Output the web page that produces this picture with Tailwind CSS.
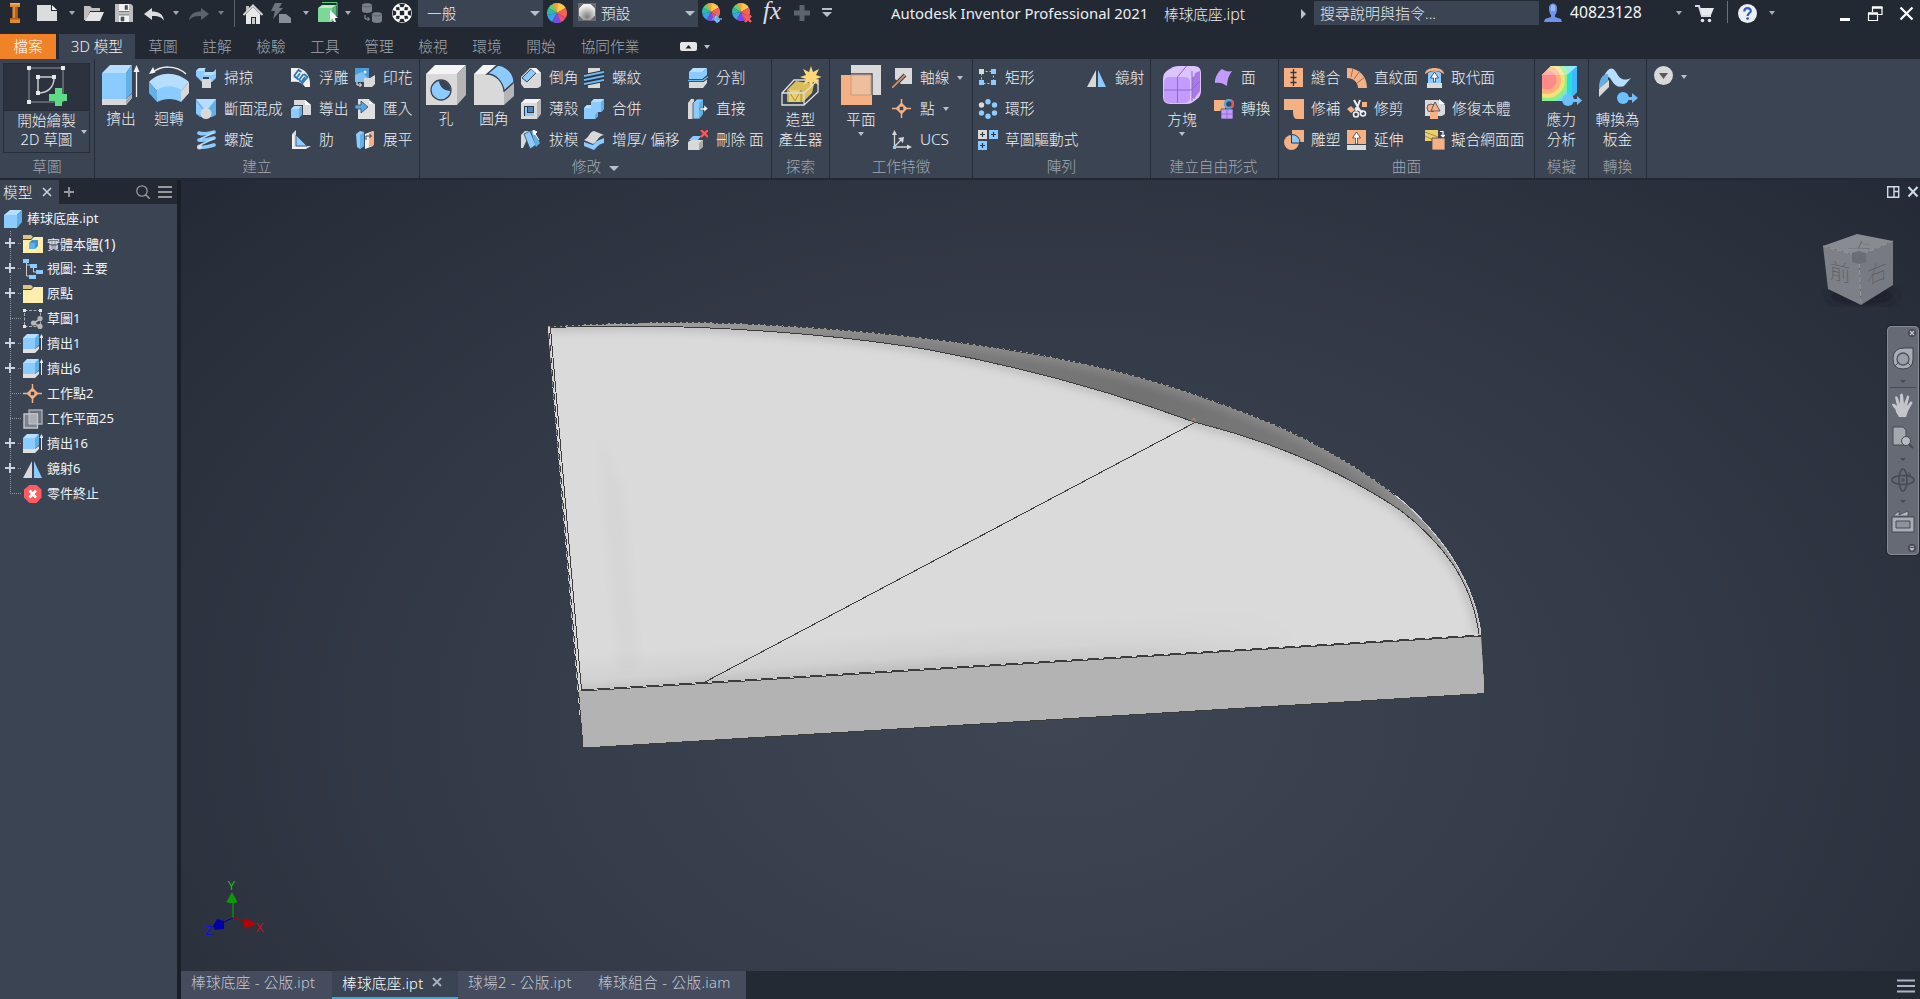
<!DOCTYPE html>
<html lang="zh-Hant">
<head>
<meta charset="utf-8">
<title>Autodesk Inventor Professional 2021</title>
<script src="https://cdn.jsdelivr.net/npm/@tailwindcss/browser@4"></script>
</head>
<body class="w-[1920px] h-[999px] overflow-hidden bg-[#222933] font-['Noto_Sans','Noto_Sans_CJK_TC',sans-serif] text-[14.67px] leading-none text-[#f0f2f5] whitespace-nowrap">
<!-- shared icon definitions -->
<svg class="hidden">
  <defs>
    <symbol id="arr" viewBox="0 0 6 4"><path d="M0 0h6L3 4z" fill="currentColor"/></symbol>
    <symbol id="box" viewBox="0 0 20 20"><path d="M1 6l6-5h12l-5 5z" fill="#b5deff"/><path d="M1 6h13v13H1z" fill="#8ccbff"/><path d="M14 6l5-5v12l-5 6z" fill="#5fb0e8"/></symbol>
    <symbol id="extr" viewBox="0 0 20 20"><path d="M0 15h12l4-3v3l-4 4H0z" fill="#e0e0e0"/><path d="M0 4l4-4h12l-3 4z" fill="#b5deff"/><path d="M0 4h12v11H0z" fill="#8ccbff"/><path d="M12 4l4-4v11l-4 4z" fill="#5fb0e8"/><path d="M18.500 16V3" stroke="#e6e6e6" stroke-width="1"/><path d="M16.500 4l2-4 2 4z" fill="#e6e6e6"/></symbol>
    <symbol id="mirror" viewBox="0 0 20 20"><path d="M9 2v17H0z" fill="#d8d8d8"/><path d="M11 2v17h8z" fill="#8ccbff"/></symbol>
    <symbol id="wpoint" viewBox="0 0 20 20"><path d="M9.500 0v19M0 9.500h19" stroke="#f5b183" stroke-width="1.500"/><path d="M9.500 3.500l6 6-6 6-6-6z" fill="#f5b183"/><rect x="7.750" y="7.750" width="3.500" height="3.500" fill="#3b4453"/></symbol>
    <symbol id="folder" viewBox="0 0 20 20"><path d="M0 3V1h8l2 2-2 2H0z" fill="#d9c584"/><path d="M0 6h8l3-3h9v16H0z" fill="#ffedae"/></symbol>
    <symbol id="wheel" viewBox="0 0 20 20"><g transform="translate(10 10)"><path d="M0 0V-10A10 10 0 0 1 8.700-5z" fill="#ffc845"/><path d="M0 0L8.700-5A10 10 0 0 1 8.700 5z" fill="#f4605c"/><path d="M0 0L8.700 5A10 10 0 0 1 3 9.600z" fill="#e8506c"/><path d="M0 0L4 9.200A10 10 0 0 1-5 8.700z" fill="#7a4be0"/><path d="M0 0L-5 8.700A10 10 0 0 1-9.800 2z" fill="#3ca0f0"/><path d="M0 0L-9.800 2A10 10 0 0 1-8.700-5z" fill="#2fb8b0"/><path d="M0 0L-8.700-5A10 10 0 0 1-3-9.500z" fill="#62cf6a"/><path d="M0 0L-4-9.200A10 10 0 0 1 1-10z" fill="#ff9a3c"/></g></symbol>
    <pattern id="hatch" width="5" height="5" patternUnits="userSpaceOnUse"><path d="M-1 6L6-1" stroke="#2b323d" stroke-width="1"/></pattern>
  </defs>
</svg>

<div class="flex flex-col w-[1920px] h-[999px]">
  <!-- title bar -->
  <header class="relative flex items-center h-[27px] shrink-0 text-[#a9afba]">
    <svg class="absolute left-0 top-0 w-[29px] h-[28px]"><rect width="29" height="28" fill="url(#hatch)"/></svg>
    <svg class="absolute left-[838px] top-0 w-[462px] h-[28px]"><rect width="462" height="28" fill="url(#hatch)"/></svg>
    <svg class="absolute left-[1780px] top-0 w-[140px] h-[28px]"><rect width="140" height="28" fill="url(#hatch)"/></svg>
    <div class="relative w-[30px] flex justify-center"><svg class="w-[10px] h-[20px] -mt-0.5" viewBox="0 0 10 20"><path d="M0 0h10v4H7.500v11H10v5H0v-5h2.500V4H0z" fill="#e08a32"/><path d="M5 4h2.500v11H5zM0 15h10v1.500H0z" fill="#b35f17"/><path d="M0 0h10v1.500H0z" fill="#f5b469"/></svg></div>
    <div class="w-[34px] flex justify-center"><svg class="w-5 h-[16px] -mt-px" viewBox="0 0 20 16"><path d="M0 0h14v6h6v10H0z" fill="#dcdcdc"/><path d="M15 0l5 5h-5z" fill="#f2f2f2"/></svg></div>
    <div class="w-4 flex justify-center"><svg class="w-[6px] h-1 -mt-px"><use href="#arr"/></svg></div>
    <div class="w-7 flex justify-center"><svg class="w-5 h-[17px] -mt-px" viewBox="0 0 20 17"><path d="M0 15V1h6l2 2h8v3H6L2 15z" fill="#bfbfbf"/><path d="M6 7h14l-4 9H1z" fill="#e4e4e4"/></svg></div>
    <div class="w-8 flex justify-center"><svg class="w-[18px] h-[18px] -mt-px" viewBox="0 0 18 18"><path d="M0 0h16l2 2v16H0z" fill="#bdbdbd"/><path d="M4 0h10v7H4zM4 11h10v7H4z" fill="#f2f2f2"/><path d="M10 1.500h2.500v4H10zM4 11h10M4 7.500h10M6 13h3v4H6z" stroke="#4a4f59" fill="#4a4f59" stroke-width=".6"/></svg></div>
    <div class="w-7 flex justify-center"><svg class="w-5 h-[13px] mt-px" viewBox="0 0 20 13"><path d="M0 6l8-6v3.500c6 0 11 2 12 9-3-4-7-4.500-12-4.500v4z" fill="#dcdcdc"/></svg></div>
    <div class="w-4 flex justify-center"><svg class="w-[6px] h-1 -mt-px"><use href="#arr"/></svg></div>
    <div class="w-[30px] flex justify-center"><svg class="w-5 h-[13px] mt-px" viewBox="0 0 20 13"><path d="M20 6l-8-6v3.500c-6 0-11 2-12 9 3-4 7-4.500 12-4.500v4z" fill="#5d626b"/></svg></div>
    <div class="w-[14px] flex justify-center text-[#757b86]"><svg class="w-[6px] h-1 -mt-px"><use href="#arr"/></svg></div>
    <div class="w-3 flex justify-center"><div class="w-px h-[27px] bg-[#5b616c]"></div></div>
    <div class="w-[26px] flex justify-center"><svg class="w-5 h-5" viewBox="0 0 20 20"><path d="M3 2h3v4L3 8z" fill="#bdbdbd"/><path d="M3 10l7-7 7 7v10h-4v-7H8v7H3z" fill="#e8e8e8"/><path d="M9 14h3v6H9z" fill="#c8c8c8"/><path d="M.5 11L10 1.500 19.500 11" fill="none" stroke="#d2d2d2" stroke-width="2"/></svg></div>
    <div class="w-[30px] flex justify-center"><svg class="w-5 h-5 -mt-px" viewBox="0 0 20 20"><path d="M4 0h7L8 5h4L2 16l2-8H0z" fill="#6f747d"/><path d="M8 11h7l5 4v5H8z" fill="#8a8f97"/></svg></div>
    <div class="w-5 flex justify-center"><svg class="w-[6px] h-1 -mt-px"><use href="#arr"/></svg></div>
    <div class="w-6 flex justify-center"><svg class="w-5 h-5 -mt-[3px]" viewBox="0 0 20 20"><path d="M4 .5h15V14" fill="none" stroke="#4bd47a"/><path d="M0 6l4-3h15l-4 3z" fill="#b0f0c4"/><path d="M0 6h14v14H0z" fill="#7bd897"/><path d="M14 6l4-3v13l-4 4z" fill="#58b877"/><path d="M12 8l8 8h-3.500l1.500 4-2 .5-1.500-4L12 19z" fill="#fff"/></svg></div>
    <div class="w-4 flex justify-center"><svg class="w-[6px] h-1 -mt-px"><use href="#arr"/></svg></div>
    <div class="w-8 flex justify-center"><svg class="w-5 h-5 -mt-px" viewBox="0 0 20 20"><path d="M0 2c0-2.500 10-2.500 10 0v6c0 2.500-10 2.500-10 0zM10 11c0-2.500 10-2.500 10 0v7c0 2.500-10 2.500-10 0z" fill="#7b8088"/><path d="M3 12v4h4M5.500 14l2 2-2 2" stroke="#9a9fa6" fill="none"/><path d="M0 2c0 2.500 10 2.500 10 0M10 11c0 2.500 10 2.500 10 0" stroke="#5d626b" fill="none"/></svg></div>
    <div class="w-7 flex justify-center"><svg class="w-5 h-5 -mt-px" viewBox="0 0 20 20"><circle cx="10" cy="10" r="10" fill="#fff"/><path d="M8 8h4v4H8zM7.500 1l5 0-1 3h-3zM7.500 19h5l-1-3h-3zM1 7.500v5l3-1v-3zM19 7.500v5l-3-1v-3zM4 4.500l3-.5.500 3L4.500 7zM16 4.500L13 4l-.5 3 3 0zM4 15.500l3 .5.500-3-3 0zM16 15.500l-3 .5-.5-3 3 0z" fill="#20252e" stroke="#20252e" stroke-width=".4"/></svg></div>
    <div class="ml-0.5 w-[125px] h-[27px] bg-[#3b4453] flex items-center justify-between pl-[9px] pr-[3px] text-[#eceff3]"><span class="font-light -mt-px">一般</span><svg class="w-[10px] h-[5px] text-[#b9c0cb]" viewBox="0 0 10 5"><path d="M0 0h10L5 5z" fill="currentColor"/></svg></div>
    <div class="w-7 flex justify-center"><svg class="w-5 h-5 -mt-px"><use href="#wheel"/></svg></div>
    <div class="ml-0.5 w-[125px] h-[27px] bg-[#3b4453] flex items-center pl-[5px] pr-[3px] text-[#eceff3]">
      <svg class="w-[18px] h-[18px] -mt-1" viewBox="0 0 18 18"><defs><radialGradient id="ballg" cx=".5" cy=".8" r=".7"><stop offset="0" stop-color="#7c7c7c"/><stop offset="1" stop-color="#f4f4f4"/></radialGradient></defs><path fill="#6b6b6b" d="M0 0h18v18H0z"/><path d="M5.500 1h7L17 5.500v7L12.500 17h-7L1 12.500v-7z" fill="url(#ballg)"/></svg>
      <span class="ml-[5px] -mt-px font-light">預設</span><svg class="ml-auto w-[10px] h-[5px] text-[#b9c0cb]" viewBox="0 0 10 5"><path d="M0 0h10L5 5z" fill="currentColor"/></svg></div>
    <div class="w-7 flex justify-center"><svg class="w-5 h-5 -mt-px" viewBox="0 0 20 20"><use href="#wheel" width="18" height="18"/><path d="M13 13h3l2 5-3 2-3-3z" fill="#8ccbff"/><path d="M15 11v9M10 16h10" stroke="#5fb0e8" stroke-width="1.500"/></svg></div>
    <div class="w-8 flex justify-center"><svg class="w-5 h-5 -mt-px" viewBox="0 0 20 20"><use href="#wheel" width="18" height="18"/><path d="M13 12.500l6 6.500M19 12.500L13 19" stroke="#ff5a5f" stroke-width="2.500"/></svg></div>
    <div class="w-7 flex justify-center"><span class="font-['Liberation_Serif',serif] italic text-[25px] leading-5 -mt-1.5 text-[#dcdfe3]">fx</span></div>
    <div class="w-8 flex justify-center"><svg class="w-4 h-4 -mt-px" viewBox="0 0 16 16"><path d="M5.500 0h5v5.500H16v5h-5.500V16h-5v-5.500H0v-5h5.500z" fill="#5d626b"/></svg></div>
    <div class="w-[18px] flex justify-center"><svg class="w-[10px] h-[9px] -mt-0.5" viewBox="0 0 10 9"><path d="M0 0h10v2H0zM0 4h10L5 9z" fill="#b9bec7"/></svg></div>
    <div class="relative ml-[55px] w-[273px] text-[14.900px] text-[#eceef1]">Autodesk Inventor Professional 2021</div>
    <div class="relative w-[137px] text-[#eceef1] font-light">棒球底座<span class="text-[16px]">.ipt</span></div>
    <svg class="w-[5px] h-[10px]" viewBox="0 0 5 10"><path d="M0 0l5 5-5 5z" fill="#b9c0cb"/></svg>
    <div class="ml-[8px] -mt-px w-[225px] h-[24px] bg-[#3b4453] flex items-center pl-[6px] text-[15px] text-[#e6e9ee] font-light">搜尋說明與指令...</div>
    <svg class="ml-[5px] w-[18px] h-[19px] -mt-0.5" viewBox="0 0 18 19"><path d="M5 5c0-6 8-6 8 0 0 4-1 6-2 7v2l6 2 1 3H0l1-3 6-2v-2C6 11 5 9 5 5z" fill="#6f93ea"/><path d="M7 4c0-3 4-3 4 0v4H7z" fill="#9bb8ff"/></svg>
    <span class="ml-[8px] -mt-px w-[96px] text-[15.700px] text-[#f6f7f8]">40823128</span>
    <div class="w-[26px] flex justify-center -mt-px"><svg class="w-[6px] h-1"><use href="#arr"/></svg></div>
    <svg class="ml-[3px] w-5 h-[18px]" viewBox="0 0 20 18"><path d="M0 1h4l3 10h9" fill="none" stroke="#d5d9e6" stroke-width="2"/><path d="M5 3h14l-3 7H7z" fill="#e8eaf2"/><circle cx="7.500" cy="15.500" r="1.800" fill="#dfe3f2"/><circle cx="14.500" cy="15.500" r="1.800" fill="#dfe3f2"/></svg>
    <div class="ml-[12px] -mt-1 w-px h-[22px] bg-[#6b717c]"></div>
    <svg class="ml-[10px] w-[19px] h-[19px] -mt-px" viewBox="0 0 19 19"><circle cx="9.500" cy="9.500" r="9.500" fill="#eceff5"/><path d="M6.300 7.500c0-4.500 6.500-4.300 6.500-.6 0 2.300-3.200 2.400-3.200 5" fill="none" stroke="#2f5db8" stroke-width="2.200"/><circle cx="9.600" cy="14.600" r="1.400" fill="#2f5db8"/></svg>
    <div class="ml-[11px] w-[8px] flex justify-center -mt-px"><svg class="w-[6px] h-1"><use href="#arr"/></svg></div>
    <svg class="relative ml-[64px] w-[75px] h-[16px]" viewBox="0 0 75 16" fill="none" stroke="#fff"><path d="M0 13.500h10" stroke-width="3"/><path d="M28.500 7.500h9v7h-9zM32.500 6V1.500h9.500v7h-4" stroke-width="1.200"/><path d="M28 7.500h10M32 1.500h10.500" stroke-width="2.400"/><path d="M60.500 1.500l12 12M72.500 1.500l-12 12" stroke-width="2.200"/></svg>
  </header>

  <!-- ribbon tabs -->
  <nav class="flex items-end h-8 shrink-0 font-light text-[#a3a8b0]">
    <div class="w-14 h-[25px] bg-[#f08327] text-white flex items-center justify-center">檔案</div>
    <div class="ml-[3px] w-[76px] h-[25px] bg-[#3b4453] text-[#f0f2f5] flex items-center justify-center">3D 模型</div>
    <div class="ml-[1px] w-[54px] h-[25px] flex items-center justify-center">草圖</div>
    <div class="w-[54px] h-[25px] flex items-center justify-center">註解</div>
    <div class="w-[54px] h-[25px] flex items-center justify-center">檢驗</div>
    <div class="w-[54px] h-[25px] flex items-center justify-center">工具</div>
    <div class="w-[54px] h-[25px] flex items-center justify-center">管理</div>
    <div class="w-[54px] h-[25px] flex items-center justify-center">檢視</div>
    <div class="w-[54px] h-[25px] flex items-center justify-center">環境</div>
    <div class="w-[54px] h-[25px] flex items-center justify-center">開始</div>
    <div class="w-[84px] h-[25px] flex items-center justify-center">協同作業</div>
    <div class="ml-[28px] h-[25px] flex items-center gap-[7px] text-[#b9c0cb]"><svg class="w-[17px] h-[9px]" viewBox="0 0 17 9"><rect width="17" height="9" rx="2" fill="#e6e6e6"/><path d="M5.500 6.500L8.500 3l3 3.500z" fill="#222"/></svg><svg class="w-[6px] h-1"><use href="#arr"/></svg></div>
  </nav>

  <!-- ribbon -->
  <section class="flex h-[121px] shrink-0 bg-[#3b4453] border-b-2 border-[#222933] font-light text-[#f0f2f5]">
    <!-- sketch -->
    <div class="w-[95px] pt-[3px] border-r border-[#262c37] flex flex-col">
      <div class="h-[93px] flex pt-px pl-[3px]">
        <div class="w-[87px] h-[90px] border border-[#272d38] flex flex-col">
          <div class="h-[47px] bg-[#2c323e] border-b border-[#272d38] flex justify-center pt-[2px]">
            <svg class="w-10 h-10" viewBox="0 0 40 40"><path d="M2 2h34v34H2z" fill="none" stroke="#8f949d"/><path d="M11 11h16v1c0 9-6 15-16 15z" fill="none" stroke="#c9ccd1" stroke-width="1.500"/><path d="M0 0h4v4H0zM34 0h4v4h-4zM0 34h4v4H0zM9 9h4v4H9zM25 9h4v4h-4zM9 25h4v4H9z" fill="#e8e8e8"/><path d="M28 22h7v6h5v7h-5v5h-7v-5h-6v-7h6z" fill="#5fdb85"/></svg>
          </div>
          <div class="relative flex-1 flex flex-col items-center leading-[19px]"><span>開始繪製</span><span>2D 草圖</span><svg class="absolute right-[2px] top-[19px] w-[6px] h-1 text-[#b9c0cb]"><use href="#arr"/></svg></div>
        </div>
      </div>
      <div class="h-[23px] flex items-center justify-center text-[#a3a8b0]">草圖</div>
    </div>
    <!-- create -->
    <div class="w-[325px] pt-[3px] border-r border-[#262c37] flex flex-col">
      <div class="h-[93px] flex pl-[2px]">
        <div class="w-12 flex flex-col items-center pt-[3px] gap-[6px]"><svg class="w-10 h-10" viewBox="0 0 40 40"><path d="M1 34h24l6-5v4l-6 7H1z" fill="#d9d9d9"/><path d="M25 35l6-6v4l-6 7z" fill="#aaa"/><path d="M1 8l8-8h22l-6 8z" fill="#b5deff"/><path d="M1 8h24v26H1z" fill="#8ccbff"/><path d="M25 8l6-8v28l-6 6z" fill="#62b0e8"/><path d="M35.500 32V5" stroke="#f2f2f2" stroke-width="1.300"/><path d="M32.500 7l3-7 3 7z" fill="#f2f2f2"/></svg><span>擠出</span></div>
        <div class="w-12 flex flex-col items-center pt-[3px] gap-[6px]"><svg class="w-10 h-10" viewBox="0 0 40 40"><path d="M3 8C12 0 27 0 37 9" fill="none" stroke="#f2f2f2" stroke-width="1.500"/><path d="M0 9l4-7 2.500 5.500z" fill="#f2f2f2"/><path d="M0 17C10 6 28 6 40 17l-8 9c-6-5-16-5-24 0z" fill="#b5deff"/><path d="M8 25c8-5 16-5 24 0v12c-7-4-16-4-24 0z" fill="#8ccbff"/><path d="M0 17l8 9v11L0 28z" fill="#62b0e8"/><path d="M40 17v11l-8 9V26z" fill="#d9d9d9"/></svg><span>迴轉</span></div>
        <div class="ml-[3px] w-[95px] flex flex-col">
          <div class="h-[31px] flex items-center gap-2"><svg class="w-5 h-5" viewBox="0 0 20 20"><path d="M0 3l3-3h6v4h8l3-3v9l-4 4h-3V9H7v6L0 8z" fill="#8ccbff"/><path d="M0 3l3-3h7L7 3zM7 6l3-2h10l-3 3H7z" fill="#b5deff"/><path d="M6 11h9v9H6z" fill="#d9d9d9"/></svg><span>掃掠</span></div>
          <div class="h-[31px] flex items-center gap-2"><svg class="w-5 h-5" viewBox="0 0 20 20"><path d="M0 0h20v16l-4 2H4l-4-3z" fill="#62b0e8"/><path d="M0 0h20L12 10H8z" fill="#b5deff"/><path d="M0 2l7 9-3 5-4-2z" fill="#8ccbff"/><circle cx="10" cy="14.500" r="5.500" fill="#d9d9d9"/></svg><span>斷面混成</span></div>
          <div class="h-[31px] flex items-center gap-2"><svg class="w-5 h-5" viewBox="0 0 20 20"><path d="M3 3c5 2 11 0 15-1M3 10c5 1 11-1 15-2M5 17c5 1 9-1 13-2" fill="none" stroke="#8ccbff" stroke-width="3.600" stroke-linecap="round"/><path d="M18 2.500L4 9M18 8.500L4 15" stroke="#b5deff" stroke-width="1.500"/><circle cx="3.500" cy="17" r="2.500" fill="#d9d9d9"/></svg><span>螺旋</span></div>
        </div>
        <div class="w-[64px] flex flex-col">
          <div class="h-[31px] flex items-center gap-2"><svg class="w-5 h-5" viewBox="0 0 20 20"><path d="M0 0h7c8 1 12 9 12 15v4h-5C12 15 7 13 0 14z" fill="#f0f0f0"/><path d="M3 8L7.500 2l3 2M5.500 10L9 5.500M3 8l4.500 3.500M8 12l4.500-6M8 12l3.500 3 5-6-3.500-3M11 13l3-4" fill="none" stroke="#2d78b8" stroke-width="1.800"/></svg><span>浮雕</span></div>
          <div class="h-[31px] flex items-center gap-2"><svg class="w-5 h-5" viewBox="0 0 20 20"><path d="M3 1h11l6 5v10H3z" fill="#d9d9d9"/><path d="M14 1l6 5h-6z" fill="#fff"/><path d="M-.5 9l3-3h9.500v10l-3 3.500h-9.500z" fill="#3b4453"/><path d="M0 10l3-3h8l-3 3z" fill="#b5deff"/><path d="M0 10h8v9H0z" fill="#8ccbff"/><path d="M8 10l3-3v9l-3 3z" fill="#62b0e8"/></svg><span>導出</span></div>
          <div class="h-[31px] flex items-center gap-2"><svg class="w-5 h-5" viewBox="0 0 20 20"><path d="M1 4l4-4v10l9 6h6l-5 3H1z" fill="#d9d9d9"/><path d="M2 5v13h13" fill="none" stroke="#f2f2f2" stroke-width="2"/><path d="M5 5l11 11H5z" fill="#8ccbff" stroke="#3b4453" stroke-width=".8"/></svg><span>肋</span></div>
        </div>
        <div class="flex flex-col">
          <div class="h-[31px] flex items-center gap-2"><svg class="w-5 h-5" viewBox="0 0 20 20"><path d="M0 0h14v14H0z" fill="#4f9bd8"/><path d="M0 7l7-3 7 7v3H0z" fill="#7fc0f2"/><circle cx="10" cy="4" r="1.500" fill="#d7ecff"/><path d="M9 10h6l5-3v9l-3 3H9z" fill="#d9d9d9"/><path d="M2 14v3h4M4.500 15l2 2-2 2" fill="none" stroke="#fff"/></svg><span>印花</span></div>
          <div class="h-[31px] flex items-center gap-2"><svg class="w-5 h-5" viewBox="0 0 20 20"><path d="M3 0h11l6 5v15H3z" fill="#e0e0e0"/><path d="M14 0l6 5h-6z" fill="#3b4453"/><path d="M14 1v4h5z" fill="#fff"/><path d="M0 6h6V2l7 6-7 6v-4H0z" fill="#55a8e8" stroke="#3b4453" stroke-width=".8"/></svg><span>匯入</span></div>
          <div class="h-[31px] flex items-center gap-2"><svg class="w-5 h-5" viewBox="0 0 20 20"><path d="M1 4l4-3 4 1v14l-4 3-3-2z" fill="#8ccbff"/><path d="M5 5l4-3v14l-4 3z" fill="#62b0e8"/><path d="M10 4l8-3v15l-8 3z" fill="#f0f0f0"/><path d="M14 3l5-2v14l-5 2z" fill="#f5b183"/><path d="M11 10V6h5M14.500 4l2 2-2 2" fill="none" stroke="#3b4453"/></svg><span>展平</span></div>
        </div>
      </div>
      <div class="h-[23px] flex items-center justify-center text-[#a3a8b0]">建立</div>
    </div>
    <!-- modify -->
    <div class="w-[352px] pt-[3px] border-r border-[#262c37] flex flex-col">
      <div class="h-[93px] flex pl-[2px]">
        <div class="w-12 flex flex-col items-center pt-[3px] gap-[6px]"><svg class="w-10 h-10" viewBox="0 0 40 40"><path d="M0 9l9-9h31l-9 9z" fill="#f4f4f4"/><path d="M0 9h31v31H0z" fill="#d9d9d9"/><path d="M31 9l9-9v30l-9 10z" fill="#b5b5b5"/><circle cx="15" cy="25" r="10" fill="#8ccbff" stroke="#3b4453" stroke-width="1.300"/><path d="M13 15.500A10 10 0 0 1 24.500 26 11 11 0 0 1 13 15.500z" fill="#3b4453"/></svg><span>孔</span></div>
        <div class="w-12 flex flex-col items-center pt-[3px] gap-[6px]"><svg class="w-10 h-10" viewBox="0 0 40 40"><path d="M0 9l9-9h13l-9 9z" fill="#f4f4f4"/><path d="M0 9h13c9 0 17 8 17 18v13H0z" fill="#d9d9d9"/><path d="M30 27l10-9v13l-10 9z" fill="#b5b5b5"/><path d="M13 9l11-9c9 1 16 9 16 17l-10 9C29 17 22 9 13 9z" fill="#8ccbff" stroke="#3b4453" stroke-width="1.300"/></svg><span>圓角</span></div>
        <div class="ml-[3px] w-[63px] flex flex-col">
          <div class="h-[31px] flex items-center gap-2"><svg class="w-5 h-5" viewBox="0 0 20 20"><path d="M0 9L9 0h6l5 5v13l-3 2H3l-3-4z" fill="#d9d9d9"/><path d="M1 10L10 1l5 4-9 9z" fill="#8ccbff" stroke="#3b4453"/><path d="M9 0h6l5 5h-5z" fill="#f4f4f4"/></svg><span>倒角</span></div>
          <div class="h-[31px] flex items-center gap-2"><svg class="w-5 h-5" viewBox="0 0 20 20"><path d="M0 4l4-4h16l-4 4z" fill="#f4f4f4"/><path d="M0 4h16v16H0z" fill="#d9d9d9"/><path d="M16 4l4-4v15l-4 5z" fill="#b5b5b5"/><path d="M3 7h10v10H3z" fill="#2f3846"/><path d="M4 8h2v6h7v3H4z" fill="#8ccbff"/><path d="M7 8h5v5H7z" fill="#4b84b4"/></svg><span>薄殼</span></div>
          <div class="h-[31px] flex items-center gap-2"><svg class="w-5 h-5" viewBox="0 0 20 20"><path d="M0 5l4-4h6L2 18H0z" fill="#d9d9d9"/><path d="M3 4l6-3 6 14-6 4z" fill="#8ccbff" stroke="#3b4453" stroke-width=".8"/><path d="M10 1l3 0 6 12-4 4z" fill="#62b0e8"/><path d="M13 2l5 8M12 0l4 2-3 3z" fill="#fff" stroke="#fff"/></svg><span>拔模</span></div>
        </div>
        <div class="w-[104px] flex flex-col">
          <div class="h-[31px] flex items-center gap-2"><svg class="w-5 h-5" viewBox="0 0 20 20"><path d="M4 0h12v20H4z" fill="#d9d9d9"/><path d="M0 8l20-4M0 12l20-4M0 16l20-4" stroke="#2b333f" stroke-width="4"/><path d="M0 8l20-4M0 12l20-4M0 16l20-4" stroke="#6cb8f0" stroke-width="2"/></svg><span>螺紋</span></div>
          <div class="h-[31px] flex items-center gap-2"><svg class="w-5 h-5" viewBox="0 0 20 20"><path d="M0 9l3-3h4V3l3-3h10v10l-3 3h-3v4l-3 3H0z" fill="#8ccbff"/><path d="M7 3l3-3h10l-3 3zM0 9l3-3h4l0 3z" fill="#b5deff"/><path d="M17 3l3-3v10l-3 3zM11 15l3-2v4l-3 3z" fill="#62b0e8"/></svg><span>合併</span></div>
          <div class="h-[31px] flex items-center gap-2"><svg class="w-5 h-5" viewBox="0 0 20 20"><path d="M0 12l9 3c3-4 6-5 11-7v5c-5 1-7 4-10 7l-10-4z" fill="#8ccbff"/><path d="M0 10C5 8 5 2 10 1l10 4c-6 1-7 7-11 9z" fill="#d9d9d9"/></svg><span>增厚/ 偏移</span></div>
        </div>
        <div class="flex flex-col">
          <div class="h-[31px] flex items-center gap-2"><svg class="w-5 h-5" viewBox="0 0 20 20"><path d="M1 14h14l4-3v4l-4 5H1z" fill="#d9d9d9"/><path d="M1 4l4-4h14l-4 4z" fill="#b5deff"/><path d="M1 4h14l4-4v7l-4 4H1z" fill="#8ccbff"/><path d="M0 12.500h15l5-4" stroke="#2b333f" stroke-width="3" fill="none"/><path d="M0 12.500h15l5-4" stroke="#6cb8f0" stroke-width="1.500" fill="none"/></svg><span>分割</span></div>
          <div class="h-[31px] flex items-center gap-2"><svg class="w-5 h-5" viewBox="0 0 20 20"><path d="M0 4l3-4h3v20H0z" fill="#d9d9d9"/><path d="M5 4l4-4h6v15l-4 5H5z" fill="#8ccbff" stroke="#3b4453" stroke-width=".8"/><path d="M11 4l4-4v15l-4 5z" fill="#62b0e8"/><path d="M12 9h4V6l4 3.500-4 3.500v-2h-4z" fill="#fff" stroke="#3b4453" stroke-width=".5"/></svg><span>直接</span></div>
          <div class="h-[31px] flex items-center gap-2"><svg class="w-5 h-5" viewBox="0 0 20 20"><path d="M0 12l3-2h8l4 0v7l-4 3H0z" fill="#d9d9d9"/><path d="M11 13l4-3v7l-4 3z" fill="#aaa"/><path d="M1 10l4-4h8l-3 4z" fill="#8ccbff"/><path d="M13 0l7 7M20 0l-7 7" stroke="#ff5a5f" stroke-width="2.200"/></svg><span>刪除 面</span></div>
        </div>
      </div>
      <div class="h-[23px] flex items-center justify-center gap-2 text-[#a3a8b0]">修改<svg class="w-[10px] h-[5px] mt-1" viewBox="0 0 10 5"><path d="M0 0h10L5 5z" fill="#b9c0cb"/></svg></div>
    </div>
    <!-- explore -->
    <div class="w-[58px] pt-[3px] border-r border-[#262c37] flex flex-col">
      <div class="h-[93px] flex flex-col items-center pt-[4px]"><svg class="w-10 h-10" viewBox="0 0 40 40"><path d="M6 24l9-9 18 3-2 9-9 9H6z" fill="#d9be5c"/><path d="M6 24h14v12H6z" fill="#e8cf6f"/><path d="M7 36V24l7 11 6-11v12" fill="none" stroke="#a98f3a"/><path d="M1 27h22v12H1zM1 27l12-13h24v12L23 39M23 27l14-13" fill="none" stroke="#dedede" stroke-width="1.300"/><path d="M30 0l2 6 6-3-3 6 6 2-6 2 3 6-6-3-2 6-2-6-6 3 3-6-6-2 6-2-3-6 6 3z" fill="#ffd778"/></svg><div class="leading-[20px] pt-[3px] text-center"><p>造型</p><p>產生器</p></div></div>
      <div class="h-[23px] flex items-center justify-center text-[#a3a8b0]">探索</div>
    </div>
    <!-- work features -->
    <div class="w-[143px] pt-[3px] border-r border-[#262c37] flex flex-col">
      <div class="h-[93px] flex pl-[3px]">
        <div class="w-14 flex flex-col items-center pt-[3px] gap-[7px]"><svg class="w-10 h-10" viewBox="0 0 40 40"><path d="M10 0h30v30H10z" fill="#dadada"/><path d="M0 10h31v30H0z" fill="#f5b183"/><path d="M10 9h21v21" fill="none" stroke="#3b4453" stroke-width="1.300"/><path d="M10 10h20v20H10z" fill="#ecbf9f" stroke="#c99a7a" stroke-width="1"/></svg><span>平面</span><svg class="w-[6px] h-1 -mt-0.5 text-[#b9c0cb]"><use href="#arr"/></svg></div>
        <div class="ml-[3px] flex flex-col text-[#f0f2f5]">
          <div class="h-[31px] flex items-center gap-2"><svg class="w-5 h-5" viewBox="0 0 20 20"><path d="M3 0h17v16H9l-6-5z" fill="#dadada"/><path d="M0 20L13 7" stroke="#3b4453" stroke-width="4"/><path d="M0 20L13 7" stroke="#c9916a" stroke-width="1.800"/></svg><span>軸線</span><svg class="w-[6px] h-1 text-[#b9c0cb]"><use href="#arr"/></svg></div>
          <div class="h-[31px] flex items-center gap-2"><svg class="w-5 h-5"><use href="#wpoint"/></svg><span>點</span><svg class="w-[6px] h-1 text-[#b9c0cb]"><use href="#arr"/></svg></div>
          <div class="h-[31px] flex items-center gap-2"><svg class="w-5 h-5" viewBox="0 0 20 20"><path d="M2.500 17V3M2.500 17H17M3 16l7-7" fill="none" stroke="#d5d5d5" stroke-width="1.300"/><path d="M0 5l2.500-5L5 5zM15 14.500l5 2.500-5 2.500zM12 7l-6 1 5 5z" fill="#d5d5d5"/><path d="M1 16h3v3H1z" fill="#8ccbff"/></svg><span class="text-[15.300px]">UCS</span></div>
        </div>
      </div>
      <div class="h-[23px] flex items-center justify-center text-[#a3a8b0]">工作特徵</div>
    </div>
    <!-- pattern -->
    <div class="w-[178px] pt-[3px] border-r border-[#262c37] flex flex-col">
      <div class="h-[93px] flex pl-[5px]">
        <div class="w-[109px] flex flex-col">
          <div class="h-[31px] flex items-center gap-[7px]"><svg class="w-5 h-5" viewBox="0 0 20 20"><path d="M3.500 3.500h12v12h-12z" fill="none" stroke="#c8c8c8" stroke-dasharray="2 2"/><path d="M1 1h5v5H1z" fill="#dadada"/><path d="M13 1h5v5h-5zM1 12h5v5H1zM13 12h5v5h-5z" fill="#8ccbff"/></svg><span>矩形</span></div>
          <div class="h-[31px] flex items-center gap-[7px]"><svg class="w-5 h-5" viewBox="0 0 20 20"><circle cx="3.500" cy="6" r="2.700" fill="#dadada"/><g fill="#8ccbff"><circle cx="10" cy="2.700" r="2.700"/><circle cx="16.500" cy="6" r="2.700"/><circle cx="3.500" cy="14" r="2.700"/><circle cx="16.500" cy="14" r="2.700"/><circle cx="10" cy="17.300" r="2.700"/></g></svg><span>環形</span></div>
          <div class="h-[31px] flex items-center gap-[7px]"><svg class="w-5 h-5" viewBox="0 0 20 20"><path d="M0 0h9v9H0z" fill="#dadada"/><path d="M11 0h9v9h-9zM0 11h9v9H0z" fill="#8ccbff"/><path d="M4.500 2v5M2 4.500h5M15.500 2v5M13 4.500h5M4.500 13v5M2 15.500h5" stroke="#2f3846" stroke-width="1.200"/></svg><span>草圖驅動式</span></div>
        </div>
        <div class="h-[31px] flex items-center gap-2"><svg class="w-5 h-5"><use href="#mirror"/></svg><span>鏡射</span></div>
      </div>
      <div class="h-[23px] flex items-center justify-center text-[#a3a8b0]">陣列</div>
    </div>
    <!-- freeform -->
    <div class="w-[128px] pt-[3px] border-r border-[#262c37] flex flex-col">
      <div class="h-[93px] flex pl-[3px]">
        <div class="w-14 flex flex-col items-center pt-[3px] gap-[7px]"><svg class="w-10 h-10" viewBox="0 0 40 40"><path d="M1 14Q1 8 6 5l5-3q3-1 6-1h15q7 0 7 7v18q0 5-4 8l-4 3q-2 2-6 2H8q-7 0-7-7z" fill="#dcc4ff"/><path d="M30 12q3 0 3-4l5-2v20l-6 8q-2 0-2-4z" fill="#a679e6"/><rect x="2" y="12" width="26" height="26" rx="5" fill="#c39bff"/><path d="M2 25h27l9-9M15.500 12v26M15.500 12l9-11M30 6v30" fill="none" stroke="#8f68c8" stroke-width="1"/></svg><span>方塊</span><svg class="w-[6px] h-1 -mt-0.5 text-[#b9c0cb]"><use href="#arr"/></svg></div>
        <div class="ml-[4px] flex flex-col">
          <div class="h-[31px] flex items-center gap-2"><svg class="w-5 h-5" viewBox="0 0 20 20"><path d="M1 12C2 7 5 3 8 1c3 2 6 3 10 2-3 4-5 9-5 15-4-3-8-4-12-3z" fill="#c39bff"/></svg><span class="-ml-px">面</span></div>
          <div class="h-[31px] flex items-center gap-2"><svg class="w-5 h-5" viewBox="0 0 20 20"><path d="M0 1h11v11H0z" fill="#f5b183"/><circle cx="15" cy="5" r="4" fill="#3b4453" stroke="#4fa6e8" stroke-width="2.400"/><path d="M17 1.500a4 4 0 0 1 0 7" fill="none" stroke="#f0505a" stroke-width="2.400"/><path d="M7 10h12v10H7z" fill="#c39bff" stroke="#3b4453" stroke-width=".7"/><path d="M13 10v10M7 15h12" stroke="#8f68c8" stroke-width=".8"/></svg><span class="-ml-px">轉換</span></div>
        </div>
      </div>
      <div class="h-[23px] flex items-center justify-center pr-[2px] text-[#a3a8b0]">建立自由形式</div>
    </div>
    <!-- surface -->
    <div class="w-[256px] pt-[3px] border-r border-[#262c37] flex flex-col">
      <div class="h-[93px] flex pl-[5px]">
        <div class="w-[63px] flex flex-col">
          <div class="h-[31px] flex items-center gap-[7px]"><svg class="w-5 h-5" viewBox="0 0 20 20"><path d="M0 0h19v19H0z" fill="#f5b183"/><path d="M9.500 1v17M6.500 4.500h6M6.500 9.500h6M6.500 14.500h6" stroke="#2f3846" stroke-width="1.300"/></svg><span>縫合</span></div>
          <div class="h-[31px] flex items-center gap-[7px]"><svg class="w-5 h-5" viewBox="0 0 20 20"><path d="M0 0h20v20h-7c-3 0-4-3-4-9H0z" fill="#f5b183"/></svg><span>修補</span></div>
          <div class="h-[31px] flex items-center gap-[7px]"><svg class="w-5 h-5" viewBox="0 0 20 20"><path d="M8 0h12v12H8z" fill="#f5b183"/><circle cx="7.500" cy="12.500" r="7.500" fill="#f5b183"/><path d="M7.500 4.500A8 8 0 0 1 16 13H7.500z" fill="#8ccbff" stroke="#2f3846"/></svg><span>雕塑</span></div>
        </div>
        <div class="w-[78px] flex flex-col">
          <div class="h-[31px] flex items-center gap-[7px]"><svg class="w-5 h-5" viewBox="0 0 20 20"><path d="M0 0c12 0 20 8 20 20h-9C11 14 6 10 0 10z" fill="#f5b183"/><path d="M7 11l6-8M10 15l8-6M4 9l2-9" stroke="#8d6a56" stroke-width=".9"/></svg><span>直紋面</span></div>
          <div class="h-[31px] flex items-center gap-[7px]"><svg class="w-5 h-5" viewBox="0 0 20 20"><path d="M0 10l4-3 4 4-4 3zM15 3h5v5h-5z" fill="#f5b183"/><path d="M7 1l6 11M13 1L9 12M8 9l8 4" stroke="#f0f0f0" stroke-width="2"/><circle cx="9" cy="15.500" r="2.500" fill="none" stroke="#f0f0f0" stroke-width="1.600"/><circle cx="16" cy="14.500" r="2.500" fill="none" stroke="#f0f0f0" stroke-width="1.600"/></svg><span>修剪</span></div>
          <div class="h-[31px] flex items-center gap-[7px]"><svg class="w-5 h-5" viewBox="0 0 20 20"><path d="M0 0h19v14H0z" fill="#f5b183"/><path d="M0 15h19v5H0z" fill="#dadada"/><path d="M9.500 2l4 6h-3v6h-2V8h-3z" fill="#fff" stroke="#3b4453" stroke-width=".8"/></svg><span>延伸</span></div>
        </div>
        <div class="flex flex-col">
          <div class="h-[31px] flex items-center gap-[6px]"><svg class="w-5 h-5" viewBox="0 0 20 20"><path d="M0 6c0-8 19-8 19 0l-2-1C14 2 5 2 2 5z" fill="#f5b183"/><path d="M3 5q7-4 13 0v10H3z" fill="#8ccbff"/><path d="M2 15h15v5H2z" fill="#dadada"/><path d="M9.500 4l4 6h-3v4h-2v-4h-3z" fill="#fff" stroke="#2f3846" stroke-width=".8"/></svg><span>取代面</span></div>
          <div class="h-[31px] flex items-center gap-[6px]"><svg class="w-5 h-5" viewBox="0 0 20 20"><path d="M0 1h13l7 5v9l-3 2H0z" fill="#dadada"/><path d="M14 0l6 5h-6z" fill="#fff"/><circle cx="6" cy="9" r="4" fill="#f5b183" stroke="#3b4453" stroke-width=".8"/><path d="M10 3l5 9H6z" fill="#f5b183" stroke="#3b4453" stroke-width=".8"/><path d="M5 13h8v7H5z" fill="#f5b183"/></svg><span class="ml-px">修復本體</span></div>
          <div class="h-[31px] flex items-center gap-[6px]"><svg class="w-5 h-5" viewBox="0 0 20 20"><path d="M0 0h13v8H7v3H0z" fill="#e8cf6f"/><path d="M0 2l13 5M0 6l8 4" stroke="#a98f3a"/><path d="M15 1.500h3V6M16 5l2 2 2-2" fill="none" stroke="#fff" stroke-width="1.200"/><path d="M7 8h13v12H7z" fill="#f5b183" stroke="#3b4453" stroke-width=".8"/></svg><span>擬合網面面</span></div>
        </div>
      </div>
      <div class="h-[23px] flex items-center justify-center text-[#a3a8b0]">曲面</div>
    </div>
    <!-- simulation -->
    <div class="w-[54px] pt-[3px] border-r border-[#262c37] flex flex-col">
      <div class="h-[93px] flex flex-col items-center pt-[4px]"><svg class="w-10 h-10" viewBox="0 0 40 40"><defs><clipPath id="simc"><path d="M0 9l9-9h26v26l-9 9H0z"/></clipPath></defs><g clip-path="url(#simc)"><path d="M0 0h40v40H0z" fill="#6fe0e8"/><circle cx="5" cy="14" r="22" fill="#8cf08a"/><circle cx="5" cy="14" r="18" fill="#f3e27a"/><circle cx="5" cy="14" r="14" fill="#ffb27a"/><circle cx="5" cy="14" r="9.500" fill="#ff8a8a"/><path d="M25 9L35 0v26l-9 9z" fill="#3fb8ff"/><path d="M0 9l9-9h26l-9 9z" fill="#fff" opacity=".3"/><path d="M25 9l5-4v25l-5 5z" fill="#22e0e0"/></g><circle cx="26" cy="34" r="6" fill="#6cc0ff"/><path d="M30 33h5v-3l5 4.500-5 4.500v-3h-5z" fill="#6cc0ff"/></svg><div class="leading-[20px] pt-[3px] text-center"><p>應力</p><p>分析</p></div></div>
      <div class="h-[23px] flex items-center justify-center text-[#a3a8b0]">模擬</div>
    </div>
    <!-- convert -->
    <div class="w-[58px] pt-[3px] border-r border-[#262c37] flex flex-col">
      <div class="h-[93px] flex flex-col items-center pt-[4px]"><svg class="w-10 h-10" viewBox="0 0 40 40"><path d="M6 10C10 2 14 0 18 6c4 8 8 9 15 6l-7 8c-5 2-9 0-12-5-2-4-5-6-8-5z" fill="#b5deff"/><path d="M1 22c0-8 3-14 9-14v7C6 17 5 20 5 24z" fill="#62b0e8"/><path d="M1 23l10-9v7L1 31z" fill="#d9d9d9"/><circle cx="25" cy="32" r="6" fill="#6cc0ff"/><path d="M29 31h5v-4l6 5-6 5v-3h-5z" fill="#6cc0ff"/></svg><div class="leading-[20px] pt-[3px] text-center"><p>轉換為</p><p>板金</p></div></div>
      <div class="h-[23px] flex items-center justify-center text-[#a3a8b0]">轉換</div>
    </div>
    <div class="flex gap-2 h-[33px] items-center pl-[7px] text-[#b9c0cb]"><svg class="w-[19px] h-[19px]" viewBox="0 0 19 19"><circle cx="9.500" cy="9.500" r="9.500" fill="#d9d9d9"/><path d="M5 7h9l-4.500 6z" fill="#5a5a5a"/></svg><svg class="w-[6px] h-1 mt-[3px]"><use href="#arr"/></svg></div>
  </section>

  <main class="flex flex-1 min-h-0">
    <!-- model browser -->
    <aside class="w-[177px] shrink-0 bg-[#3b4453] flex flex-col">
      <div class="h-6 shrink-0 bg-[#222933] flex items-center">
        <div class="w-[59px] h-6 bg-[#3b4453] flex items-center pl-[3px] gap-[10px] font-light">模型<svg class="w-[10px] h-[10px]" viewBox="0 0 10 10"><path d="M1 1l8 8M9 1L1 9" stroke="#c9d2de" stroke-width="1.600"/></svg></div>
        <svg class="ml-[5px] w-[10px] h-[10px]" viewBox="0 0 10 10"><path d="M5 0v10M0 5h10" stroke="#9a9a9a" stroke-width="1.800"/></svg>
        <svg class="ml-[62px] w-[14px] h-[14px]" viewBox="0 0 14 14"><circle cx="6" cy="6" r="5.200" fill="none" stroke="#9a9a9a" stroke-width="1.300"/><path d="M10 10l4 4" stroke="#9a9a9a" stroke-width="1.500"/></svg>
        <svg class="ml-2 w-[14px] h-3" viewBox="0 0 14 12"><path d="M0 1h14M0 6h14M0 11h14" stroke="#9a9a9a" stroke-width="2"/></svg>
      </div>
      <div class="relative flex flex-col pt-[2px] text-[13px]">
        <svg class="absolute left-0 top-0 w-[24px] h-[300px]" viewBox="0 0 24 300" fill="none" stroke="#8f959f" stroke-dasharray="1 1"><path d="M10.500 27v262M10 114.500h11M10 189.500h11M10 214.500h11M10 289.500h11M18 39.500h4M18 64.500h4M18 89.500h4M18 139.500h4M18 164.500h4M18 239.500h4M18 264.500h4"/></svg>
        <svg class="absolute left-[5px] top-[33px] w-[11px] h-[240px]" viewBox="0 0 11 240" stroke-width="2"><path d="M0 0h11v12H0zM0 25h11v12H0zM0 50h11v12H0zM0 100h11v12H0zM0 125h11v12H0zM0 200h11v12H0zM0 225h11v12H0z" fill="#3b4453"/><path d="M5 1v10M0 6h10M5 26v10M0 31h10M5 51v10M0 56h10M5 101v10M0 106h10M5 126v10M0 131h10M5 201v10M0 206h10M5 226v10M0 231h10" stroke="#c9d2de"/></svg>
        <div class="h-[25px] flex items-center pl-[3px] gap-1"><svg class="w-5 h-5"><use href="#box"/></svg>棒球底座.ipt</div>
        <div class="h-[25px] flex items-center pl-[23px] gap-1"><svg class="w-5 h-5" viewBox="0 0 20 20"><use href="#folder"/><path d="M6 9l3-3h6v6l-3 3H6z" fill="#3f93d0"/><path d="M6 9h6v6H6z" fill="#62b0e8"/></svg><span>實體本體<span class="text-[14px]">(1)</span></span></div>
        <div class="h-[25px] flex items-center pl-[23px] gap-1"><svg class="w-5 h-5" viewBox="0 0 20 20"><path d="M3.500 4v13h4M4 6h4M10.500 9v4h3" fill="none" stroke="#c8c8c8"/><path d="M0 0h6v4H0zM7 5h7v4H7zM13 11h7v4h-7zM6 16h7v4H6z" fill="#8ccbff"/></svg><span class="[word-spacing:2px]">視圖: 主要</span></div>
        <div class="h-[25px] flex items-center pl-[23px] gap-1"><svg class="w-5 h-5"><use href="#folder"/></svg>原點</div>
        <div class="h-[25px] flex items-center pl-[23px] gap-1"><svg class="w-5 h-5" viewBox="0 0 20 20"><path d="M1.500 1.500h16v16h-16z" fill="none" stroke="#a8acb3" stroke-dasharray="3 1.500"/><path d="M0 0h3v3H0zM16 0h3v3h-3zM0 16h3v3H0z" fill="#e6e6e6"/><path d="M17 10l-6 4 6 4" fill="none" stroke="#b5b5b5" stroke-width="1.600"/><circle cx="17" cy="9.500" r="2.600" fill="#b5b5b5"/><circle cx="10.500" cy="14" r="2.600" fill="#b5b5b5"/><circle cx="17" cy="17.400" r="2.600" fill="#b5b5b5"/></svg>草圖1</div>
        <div class="h-[25px] flex items-center pl-[23px] gap-1"><svg class="w-5 h-5"><use href="#extr"/></svg>擠出1</div>
        <div class="h-[25px] flex items-center pl-[23px] gap-1"><svg class="w-5 h-5"><use href="#extr"/></svg>擠出6</div>
        <div class="h-[25px] flex items-center pl-[23px] gap-1"><svg class="w-5 h-5"><use href="#wpoint"/></svg>工作點2</div>
        <div class="h-[25px] flex items-center pl-[23px] gap-1"><svg class="w-5 h-5" viewBox="0 0 20 20"><path d="M6 1h13v14H6z" fill="#6b717d" stroke="#a9adb5" stroke-width="1.400"/><path d="M1 5h13.500v14H1z" fill="#7d828c" stroke="#c4c7cc" stroke-width="1.400"/><path d="M6 5h8.500v10H6z" fill="#a9adb5" stroke="#c4c7cc"/></svg>工作平面25</div>
        <div class="h-[25px] flex items-center pl-[23px] gap-1"><svg class="w-5 h-5"><use href="#extr"/></svg>擠出16</div>
        <div class="h-[25px] flex items-center pl-[23px] gap-1"><svg class="w-5 h-5"><use href="#mirror"/></svg>鏡射6</div>
        <div class="h-[25px] flex items-center pl-[23px] gap-1"><svg class="w-5 h-5" viewBox="0 0 20 20"><path d="M6.500 1h7L18.500 5.500v8L13.500 19h-7L1 13.500v-8z" fill="#ff5a60"/><path d="M6.500 6.500l6.500 7M13 6.500l-6.500 7" stroke="#fff" stroke-width="2.600"/></svg>零件終止</div>
      </div>
    </aside>
    <div class="w-1 shrink-0 bg-[#1b2028]"></div>

    <div class="flex-1 min-w-0 flex flex-col">
      <!-- 3D viewport -->
      <div class="relative flex-1 min-h-0 bg-[radial-gradient(ellipse_1200px_800px_at_50%_68%,#3e4654_0%,#343b48_50%,#242a35_100%)]">
        <svg class="absolute inset-0 w-full h-full" viewBox="181 180 1739 791">
          <defs>
            <linearGradient id="rim" gradientUnits="userSpaceOnUse" x1="620" y1="0" x2="1480" y2="0"><stop offset="0" stop-color="#a8a8a8"/><stop offset=".28" stop-color="#808080"/><stop offset=".6" stop-color="#727272"/><stop offset=".88" stop-color="#7c7c7c"/><stop offset=".95" stop-color="#9c9c9c"/><stop offset="1" stop-color="#d8d8d8"/></linearGradient>
            <linearGradient id="ao" gradientUnits="userSpaceOnUse" x1="1000" y1="664" x2="997" y2="624"><stop offset="0" stop-color="#000" stop-opacity=".13"/><stop offset=".35" stop-color="#000" stop-opacity=".04"/><stop offset="1" stop-color="#000" stop-opacity="0"/></linearGradient>
            <linearGradient id="aomask" gradientUnits="userSpaceOnUse" x1="580" y1="0" x2="1300" y2="0"><stop offset="0" stop-color="#fff"/><stop offset=".5" stop-color="#fff"/><stop offset="1" stop-color="#000"/></linearGradient>
            <mask id="fade" maskUnits="userSpaceOnUse" x="500" y="300" width="1000" height="460"><path d="M500 300h1000v460H500z" fill="url(#aomask)"/></mask>
            <path id="outer" d="M548 327C600 323.500 670 321.500 735 323.500 800 326.500 865 331 930 339 992 346.500 1052 355.500 1113 370.500 1170 384.500 1223 403.500 1273 424 1317 443.500 1360 468 1395 495 1417 512 1433 531 1446 548.500 1466 577 1478 606 1481 635"/>
            <path id="inner" d="M550 327.500C600 325.500 650 325.500 700 327.500 780 331 860 338 930 350 1020 366.500 1110 391 1194 422 1270 441 1340 470 1400 510 1422 526.500 1440 546 1452 563 1469 588 1476 612 1479 634"/>
            <clipPath id="facec"><path d="M550 327.500C600 325.500 650 325.500 700 327.500 780 331 860 338 930 350 1020 366.500 1110 391 1194 422 1270 441 1340 470 1400 510 1422 526.500 1440 546 1452 563 1469 588 1476 612 1479 635L581 690z"/></clipPath>
            <clipPath id="rimc"><path d="M548 327C600 323.500 670 321.500 735 323.500 800 326.500 865 331 930 339 992 346.500 1052 355.500 1113 370.500 1170 384.500 1223 403.500 1273 424 1317 443.500 1360 468 1395 495 1417 512 1433 531 1446 548.500 1466 577 1478 606 1481 635L578 690z"/></clipPath>
            <filter id="soft" x="-10%" y="-10%" width="120%" height="120%"><feGaussianBlur stdDeviation="5"/></filter>
            <filter id="softwide" x="-200%" y="-10%" width="500%" height="120%"><feGaussianBlur stdDeviation="7"/></filter>
          </defs>
          <path d="M578.500 690L1481 635 1485 693.500 583 748z" fill="#b3b3b3"/>
          <g clip-path="url(#rimc)">
            <path d="M500 300h1000v460H500z" fill="url(#rim)"/>
            <use href="#outer" fill="none" stroke="#989898" stroke-width="9" filter="url(#soft)" opacity=".7"/>
          </g>
          <path d="M548 327L640 326 581 690 578 690z" fill="#d9d9d9"/>
          <g clip-path="url(#facec)">
            <path d="M500 300h1000v460H500z" fill="#dadada"/>
            <path d="M581 690L1480 635V595L578 650z" fill="url(#ao)" mask="url(#fade)"/>
            <use href="#inner" fill="none" stroke="#000" stroke-opacity=".2" stroke-width="6" filter="url(#soft)"/>
            <path d="M598 430l22 240 18 0-16-180z" fill="#000" opacity=".02" filter="url(#softwide)"/>
          </g>
          <g fill="none" stroke="#3c3c3c" shape-rendering="crispEdges">
            <path d="M548.500 327L578.500 690 583 748"/>
            <path d="M550.500 328L581.500 690"/>
            <use href="#inner"/>
            <use href="#outer"/>
            <path d="M581 690.500L1481 635.500" stroke-width="2"/>
            <path d="M583 748L1485 693.500M1482 635L1485 693"/>
            <path d="M704 682.500L1194 423"/>
          </g>
          <g fill="none" shape-rendering="crispEdges">
            <path d="M548 327L578 690 580 715" stroke="#d2d2d2" stroke-dasharray="6 6"/>
            <path d="M594 690L1479 635.500" stroke="#d2d2d2" stroke-dasharray="4 12.330"/>
            <use href="#outer" stroke="#9a9a9a" stroke-dasharray="2 4"/>
            <path d="M1395 495C1417 512 1433 531 1446 548.500 1466 577 1478 606 1481 635" stroke="#cfcfcf"/>
          </g>
          <path d="M1191 422l3-4 2 4" fill="none" stroke="#c98a5c"/>
          <!-- axis triad -->
          <g stroke-width="1">
            <path d="M233 918V900" stroke="#0a9a0a" stroke-width="1.300"/><path d="M232 892l5.500 10q-5.500 2.500-11 0z" fill="#0a9a0a"/>
            <path d="M234 918l14 4" stroke="#b00000"/><path d="M245 918l11 6-11 5q-2-5 0-11z" fill="#b80000"/>
            <path d="M233 918l-14 6" stroke="#0000a8"/><path d="M213 926l4-7 7 2 0 8-9 1z" fill="#0000a8"/>
            <text x="227.500" y="890" font-size="12" fill="#12c212" font-family="Liberation Sans">Y</text>
            <text x="255.500" y="932" font-size="12" fill="#d01010" font-family="Liberation Sans">X</text>
            <text x="205.500" y="935" font-size="12" fill="#1010e0" font-family="Liberation Sans">Z</text>
          </g>
          <!-- view cube -->
          <ellipse cx="1862" cy="296" rx="34" ry="9" fill="#141821" opacity=".6" filter="url(#soft)"/>
          <path d="M1823 246L1857 234 1893 241 1859 256z" fill="#888b91"/>
          <path d="M1823 246L1859 256 1861 305 1828 289z" fill="#7d8087"/>
          <path d="M1859 256L1893 241 1893 285 1861 305z" fill="#777a82"/>
          <path d="M1823 246l36 10 34-15M1859 256l2 49" fill="none" stroke="#96989e" stroke-dasharray="5 2"/>
          <path d="M1852 253l7-2 7 2v9l-7 2-7-2z" fill="#696d76"/>
          <g fill="#555963" font-family="Noto Sans CJK TC" font-size="22" font-weight="100"><text transform="matrix(.95 .2 .04 1 1830 278)">前</text><text transform="matrix(.9 -.36 0 1 1867 285)">右</text><text transform="matrix(1.100 .02 -.2 .42 1847 248)">上</text></g>
        </svg>
        <svg class="absolute right-[1px] top-[6px] w-[32px] h-[12px]" viewBox="0 0 32 12" fill="none" stroke="#cfdceb"><path d="M.700.700h11v10.500H.700zM7 1v10M7 5.500h5" stroke-width="1.400"/><path d="M21.500 1l9 9.500M30.500 1l-9 9.500" stroke-width="2"/></svg>
        <!-- navigation bar -->
        <div class="absolute left-[1706px] top-[146px] w-[32px] h-[229px] rounded-[4px] bg-[#656a74] border border-[#888c95] shadow-[0_0_0_1px_#1f242e]">
          <svg class="w-[30px] h-[227px]" viewBox="1 1 30 227">
            <circle cx="25" cy="7" r="4" fill="#454a54"/><path d="M23 5l4 4M27 5l-4 4" stroke="#c8cad0" stroke-width="1.200"/>
            <path d="M6 33q0-11 11-11h9v11q0 10-10 10T6 33z" fill="#a9adb5" stroke="#3f434c"/><circle cx="16" cy="33" r="6" fill="#9a9ea7" stroke="#4c515b" stroke-width="1.300"/><path d="M11 37l-3 3M21 37l3 3" stroke="#4c515b"/>
            <path d="M13 54h6l-3 3zM13 132h6l-3 3zM13 174h6l-3 3z" fill="#454a54"/>
            <path d="M3 61.500h26" stroke="#474c56"/>
            <path d="M9 86c0-4-4-5-4-8 2-1 4 1 5 2L8 71c1-2 3 0 3 1l2 6 0-9c1-2 3-1 3 0l1 9 3-8c1-1 3 0 2 2l-2 8 3-4c2-1 3 0 2 2l-4 7-2 6h-7z" fill="#c3c5ca"/>
            <path d="M6 101h10l3 3v15H6z" fill="#a3a7af" stroke="#454a54"/><circle cx="19" cy="115" r="4.500" fill="#b8bbc1" stroke="#454a54"/><path d="M22 118l4 4" stroke="#454a54" stroke-width="2"/>
            <ellipse cx="16" cy="154" rx="11" ry="4.500" fill="none" stroke="#454a54" stroke-width="1.500"/><ellipse cx="16" cy="154" rx="4" ry="11" fill="none" stroke="#454a54" stroke-width="1.500"/><path d="M16 152v4M14 154h4M19 149h5l-3-3" stroke="#454a54" fill="none"/>
            <path d="M6 190l6-5v4l9-4v5z" fill="#b5b8be" stroke="#454a54" stroke-width=".8"/><path d="M5 191h22v15H5z" fill="#a9adb5" stroke="#454a54"/><path d="M9 195h14v7H9z" fill="#8e929b" stroke="#454a54"/>
            <circle cx="25" cy="222" r="4" fill="#454a54"/><path d="M23 220.500h4M23 222.500h4l-2 2z" stroke="#c8cad0" fill="#c8cad0" stroke-width=".8"/>
          </svg>
        </div>
      </div>
      <!-- document tabs -->
      <footer class="flex h-7 shrink-0 bg-[#222a33] font-light text-[#c3c8d0]">
        <div class="w-[151px] bg-[#444c5e] pl-[10px] pt-[4px] tracking-[.25px]">棒球底座 - 公版.ipt</div>
        <div class="w-[126px] bg-[#3b4453] border-b-2 border-[#3aa8dc] pl-[10px] pt-[5px] flex gap-[9px] text-white tracking-[.25px]">棒球底座.ipt<svg class="w-[10px] h-[10px] mt-[1px]" viewBox="0 0 10 10"><path d="M1 1l8 8M9 1L1 9" stroke="#aab2bf" stroke-width="1.800"/></svg></div>
        <div class="w-[130px] bg-[#444c5e] pl-[10px] pt-[4px] tracking-[.3px]">球場2 - 公版.ipt</div>
        <div class="w-[158px] bg-[#444c5e] pl-[10px] pt-[4px] tracking-[.35px]">棒球組合 - 公版.iam</div>
        <svg class="ml-auto mr-[5px] mt-[8px] w-[18px] h-[14px]" viewBox="0 0 18 14"><path d="M0 1.500h18M0 7h18M0 12.500h18" stroke="#a9b4c4" stroke-width="2"/></svg>
      </footer>
    </div>
  </main>
</div>
</body>
</html>
